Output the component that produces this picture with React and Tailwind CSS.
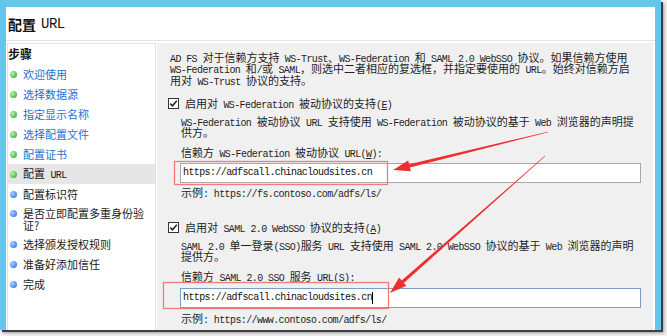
import React from "react";

const ASCII = /^[\x20-\x7e]+$/;

function T({ s }) {
  const parts = s.split(/([\x20-\x7e]+)/).filter(Boolean);
  return (
    <>
      {parts.map((p, i) =>
        ASCII.test(p) ? (
          <span key={i} className="font-['Liberation_Mono',monospace] text-[10px] tracking-[-0.6px]">{p}</span>
        ) : (
          <span key={i} className="text-[11px]">{p}</span>
        )
      )}
    </>
  );
}

function Line({ s, children, h = "h-[11px]" }) {
  return (
    <div className={h + " text-[11px] leading-[11px] whitespace-nowrap text-[#1e1e1e]"}>
      {s ? <T s={s} /> : children}
    </div>
  );
}

function arrowPoints(x1, y1, x2, y2, w0 = 0.3, w1 = 1.7, hl = 17, hw = 5.5) {
  const dx = x2 - x1, dy = y2 - y1;
  const L = Math.hypot(dx, dy);
  const ux = dx / L, uy = dy / L;
  const px = -uy, py = ux;
  const bx = x2 - ux * hl, by = y2 - uy * hl;
  const pts = [
    [x1 + px * w0, y1 + py * w0],
    [bx + px * w1, by + py * w1],
    [bx + px * hw, by + py * hw],
    [x2, y2],
    [bx - px * hw, by - py * hw],
    [bx - px * w1, by - py * w1],
    [x1 - px * w0, y1 - py * w0],
  ];
  return pts.map((p) => p[0].toFixed(2) + "," + p[1].toFixed(2)).join(" ");
}

function Dot({ green }) {
  return (
    <span
      className={
        "block w-[7px] h-[7px] rounded-full shrink-0 " +
        (green
          ? "bg-[radial-gradient(circle_at_35%_35%,#b4f5a8,#2a9b2a)]"
          : "bg-[radial-gradient(circle_at_35%_35%,#a9d0ff,#1a68dc)]")
      }
    />
  );
}

function Step({ green, label, active, blue, children, tall }) {
  return (
    <div
      className={
        "flex pl-[2px] gap-[6px] " +
        (tall ? "h-[30px] items-start pt-[3px] " : "h-[20px] items-center ") +
        (active ? "bg-[#e6e6e6]" : "")
      }
    >
      <div className={tall ? "pt-[3px]" : ""}>
        <Dot green={green} />
      </div>
      <div className={(blue ? "text-[#1f6fd6] " : "text-[#1a1a1a] ") + "text-[11px] leading-[12px] whitespace-nowrap"}>
        {children || <T s={label} />}
      </div>
    </div>
  );
}

function Checkbox() {
  return (
    <span className="flex w-[11px] h-[11px] border border-[#333] bg-white items-center justify-center shrink-0">
      <svg width="9" height="9" viewBox="0 0 9 9">
        <path d="M1.3 4.6 L3.5 6.8 L7.8 1.8" fill="none" stroke="#222" strokeWidth="1.5" />
      </svg>
    </span>
  );
}

function Field({ focused }) {
  return (
    <div
      className={
        "ml-[23px] w-[461px] h-[20px] bg-white border flex items-center pl-[2px] " +
        (focused ? "border-[#7d9cc0]" : "border-[#a8a8a8]")
      }
    >
      <span className="font-['Liberation_Mono',monospace] text-[10px] tracking-[-0.6px] text-[#111] leading-[12px]">
        https://adfscall.chinacloudsites.cn
      </span>
      {focused && <span className="block w-[1px] h-[12px] bg-black" />}
    </div>
  );
}

function U({ c }) {
  return <span className="font-['Liberation_Mono',monospace] text-[10px] tracking-[-0.6px] underline">{c}</span>;
}

export default function App() {
  return (
    <div className="relative w-[667px] h-[336px] bg-[#f1f1f1] overflow-hidden font-['Noto_Sans_CJK_SC',sans-serif]">
      <div className="w-[661px] h-[330px] bg-[#63c7ea] pl-[6px] pt-[7px] pr-[6px] shadow-[2px_2px_0_#3f3f3f,3px_3px_3px_#9a9a9a]">
        <div className="h-full bg-white flex flex-col">
          <div className="h-[34px] border-b border-[#e3e3e3] flex items-center pl-[2px] shrink-0">
            <span className="text-[14px] font-bold text-[#111] leading-[16px]">配置</span>
            <span className="font-['Liberation_Mono',monospace] text-[14px] tracking-[-0.5px] text-[#111] leading-[16px] ml-[5px]">URL</span>
          </div>
          <div className="flex-1 flex pt-[2px] pl-[1px] pr-[2px] gap-[1px] min-h-0">
            {/* steps */}
            <div className="w-[149px] border-l border-r border-t border-[#e0e0e0] bg-white flex flex-col">
              <div className="h-[20px] flex items-center">
                <span className="text-[12px] font-bold text-[#111] leading-[14px]">步骤</span>
              </div>
              <Step green blue label="欢迎使用" />
              <Step green blue label="选择数据源" />
              <Step green blue label="指定显示名称" />
              <Step green blue label="选择配置文件" />
              <Step green blue label="配置证书" />
              <Step green active label="配置 URL" />
              <Step label="配置标识符" />
              <Step tall>
                <div>是否立即配置多重身份验</div>
                <div>证?</div>
              </Step>
              <Step label="选择颁发授权规则" />
              <Step label="准备好添加信任" />
              <Step label="完成" />
            </div>
            {/* content */}
            <div className="flex-1 bg-[#f0f0f0] flex flex-col">
              <div className="pl-[13px] pt-[9px] flex flex-col">
                <Line s="AD FS 对于信赖方支持 WS-Trust、WS-Federation 和 SAML 2.0 WebSSO 协议。如果信赖方使用" />
                <Line h="h-[12px]" s="WS-Federation 和/或 SAML，则选中二者相应的复选框，并指定要使用的 URL。始终对信赖方启" />
                <Line s="用对 WS-Trust 协议的支持。" />
              </div>

              <div className="mt-[10px] h-[14px] flex items-center pl-[11px] gap-[6px]">
                <Checkbox />
                <Line>
                  <T s="启用对 WS-Federation 被动协议的支持(" />
                  <U c="E" />
                  <T s=")" />
                </Line>
              </div>

              <div className="mt-[6px] pl-[24px]">
                <Line s="WS-Federation 被动协议 URL 支持使用 WS-Federation 被动协议的基于 Web 浏览器的声明提" />
                <Line s="供方。" />
              </div>

              <div className="mt-[9px] pl-[24px]">
                <Line>
                  <T s="信赖方 WS-Federation 被动协议 URL(" />
                  <U c="W" />
                  <T s="):" />
                </Line>
              </div>

              <div className="mt-[5px]">
                <Field />
              </div>

              <div className="mt-[4px] pl-[24px]">
                <Line s="示例: https://fs.contoso.com/adfs/ls/" />
              </div>

              <div className="mt-[22px] h-[14px] flex items-center pl-[11px] gap-[6px]">
                <Checkbox />
                <Line>
                  <T s="启用对 SAML 2.0 WebSSO 协议的支持(" />
                  <U c="A" />
                  <T s=")" />
                </Line>
              </div>

              <div className="mt-[6px] pl-[24px]">
                <Line s="SAML 2.0 单一登录(SSO)服务 URL 支持使用 SAML 2.0 WebSSO 协议的基于 Web 浏览器的声明" />
                <Line s="提供方。" />
              </div>

              <div className="mt-[9px] pl-[24px]">
                <Line>
                  <T s="信赖方 SAML 2.0 SSO 服务 URL(" />
                  <U c="S" />
                  <T s="):" />
                </Line>
              </div>

              <div className="mt-[6px]">
                <Field focused />
              </div>

              <div className="mt-[5px] pl-[24px]">
                <Line s="示例: https://www.contoso.com/adfs/ls/" />
              </div>
            </div>
          </div>
        </div>
      </div>

      <svg className="absolute inset-0 pointer-events-none" width="667" height="336" viewBox="0 0 667 336">
        <rect x="174.5" y="161.5" width="213" height="23" fill="none" stroke="#f07c7c" strokeWidth="1.3" />
        <rect x="163.5" y="282.5" width="225" height="26" fill="none" stroke="#f07c7c" strokeWidth="1.3" />
        <polygon points={arrowPoints(548, 132, 393, 170)} fill="#ee2f2f" />
        <polygon points={arrowPoints(545, 156, 390, 293, 0.25, 1.6)} fill="#ee2f2f" />
      </svg>
    </div>
  );
}
